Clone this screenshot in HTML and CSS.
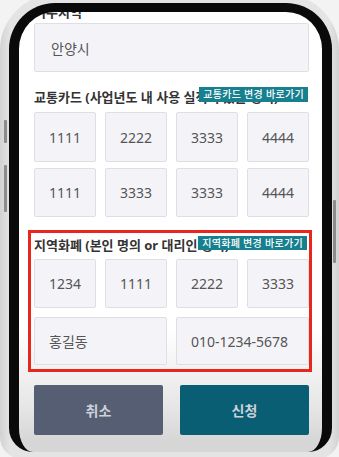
FILE: index.html
```html
<!DOCTYPE html>
<html lang="ko">
<head>
<meta charset="utf-8">
<title>신청</title>
<link rel="stylesheet" href="styles.css">
</head>
<body>
<div class="frame">
  <span class="side-btn side-l1"></span>
  <span class="side-btn side-l2"></span>
  <span class="side-btn side-r1"></span>
  <div class="bezel">
    <div class="screen">
      <div class="label label-top">거주지역</div>
      <div class="field field-left field-wide">안양시</div>

      <div class="label label-badge">교통카드 (사업년도 내 사용 실적이 있는 명의)<span class="badge badge-1">교통카드 변경 바로가기</span></div>
      <div class="grid4 row-1">
        <div class="field">1111</div>
        <div class="field">2222</div>
        <div class="field">3333</div>
        <div class="field">4444</div>
      </div>
      <div class="grid4 row-2">
        <div class="field">1111</div>
        <div class="field">3333</div>
        <div class="field">3333</div>
        <div class="field">4444</div>
      </div>

      <div class="highlight">
        <div class="label label-badge">지역화폐 (본인 명의 or 대리인 명의)<span class="badge badge-2">지역화폐 변경 바로가기</span></div>
        <div class="grid4 row-3">
          <div class="field">1234</div>
          <div class="field">1111</div>
          <div class="field">2222</div>
          <div class="field">3333</div>
        </div>
        <div class="grid2 row-4">
          <div class="field field-left">홍길동</div>
          <div class="field field-left">010-1234-5678</div>
        </div>
      </div>

      <div class="actions">
        <button class="btn btn-cancel">취소</button>
        <button class="btn btn-submit">신청</button>
      </div>
    </div>
  </div>
</div>
</body>
</html>
```

FILE: styles.css
```css
* { box-sizing: border-box; }

html, body {
  margin: 0;
  height: 457px;
  overflow: hidden;
}

body {
  background: #f3f3f3;
  font-family: "Noto Sans", "Noto Sans CJK KR", sans-serif;
}

.frame {
  position: relative;
  margin-top: -6px;
  height: 465px;
  border-radius: 56px 56px 22px 22px;
  background: linear-gradient(90deg, #d2d2d2 0, #e4e4e4 3%, #e4e4e4 97%, #d2d2d2 100%);
  padding: 9px 7px 0 9px;
}

.side-btn {
  position: absolute;
  width: 3px;
  background: #8c8c8c;
  border-radius: 1px;
}
.side-l1 { left: 4px; top: 126px; height: 23px; }
.side-l2 { left: 4px; top: 171px; height: 47px; }
.side-r1 { right: 3px; top: 206px; height: 63px; }

.bezel {
  height: 449px;
  border: 10px solid #0a0a0a;
  border-top-width: 9px;
  border-bottom: 0;
  border-radius: 46px 46px 24px 24px;
  overflow: hidden;
  background: linear-gradient(180deg, #ffffff 0, #ffffff 318px, #e6e6e6 395px, #d6d6d6 430px);
}

.screen {
  padding: 0 13px 0 15px;
}

.label {
  position: relative;
  font-size: 13px;
  line-height: 16px;
  font-weight: 700;
  color: #333333;
  white-space: nowrap;
}

.label-top {
  margin-top: -8px;
}

.field {
  display: flex;
  align-items: center;
  justify-content: center;
  height: 49px;
  background: #f4f4f8;
  border: 1px solid #dedee3;
  border-radius: 2px;
  font-size: 14px;
  color: #555555;
}

.field-left {
  justify-content: flex-start;
  padding-left: 14px;
}

.field-wide {
  margin-top: 3px;
  padding-left: 16px;
}

.label-badge {
  margin-top: 17px;
}

.badge {
  position: absolute;
  top: -2px;
  right: 1px;
  padding: 0 4px;
  height: 15px;
  line-height: 15px;
  font-size: 10px;
  letter-spacing: 0.3px;
  font-weight: 500;
  color: #ffffff;
  background: #17808f;
}

.badge-2 {
  top: -1px;
  right: 2px;
  height: 14px;
  line-height: 14px;
}

.grid4 {
  display: grid;
  grid-template-columns: repeat(4, 1fr);
  column-gap: 9px;
}

.grid2 {
  display: grid;
  grid-template-columns: 1fr 1fr;
  column-gap: 9px;
}

.row-1 { margin-top: 7px; }
.row-1 .field { height: 50px; }
.row-2 { margin-top: 6px; }

.highlight {
  margin: 13px -3px 0 -6px;
  border: 3px solid #e8261c;
  padding: 4px 0 4px 3px;
}

.highlight .label-badge { margin-top: 0; }

.row-3 { margin-top: 6px; }
.row-4 { margin-top: 9px; }
.row-4 .field { height: 48px; }

.actions {
  display: flex;
  gap: 17px;
  margin-top: 13px;
}

.btn {
  flex: 1;
  height: 50px;
  border: 0;
  border-radius: 2px;
  font-family: "Noto Sans", "Noto Sans CJK KR", sans-serif;
  font-size: 14px;
  font-weight: 700;
  color: #cdd2da;
}

.btn-cancel { background: #565e73; }
.btn-submit { background: #0a5e74; }
```
